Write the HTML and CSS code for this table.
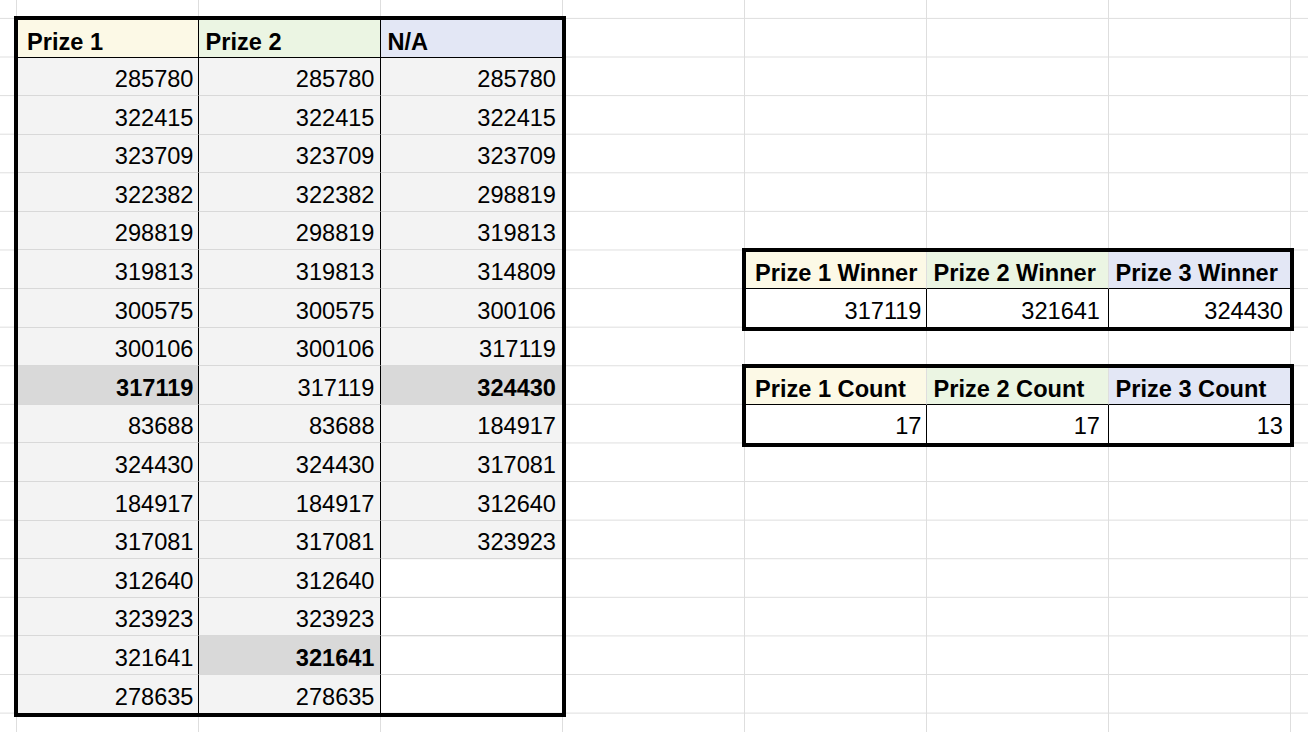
FILE: index.html
```html
<!DOCTYPE html>
<html>
<head>
<meta charset="utf-8">
<title>Prize draw</title>
<link rel="stylesheet" href="styles.css">
</head>
<body>
<div class="sheet">
  <div class="tbl main">
    <div class="c h y br first">Prize 1</div><div class="c h gr br">Prize 2</div><div class="c h b">N/A</div>
    <div class="c g br">285780</div><div class="c g br pb">285780</div><div class="c g pc">285780</div>
    <div class="c g br">322415</div><div class="c g br pb">322415</div><div class="c g pc">322415</div>
    <div class="c g br">323709</div><div class="c g br pb">323709</div><div class="c g pc">323709</div>
    <div class="c g br">322382</div><div class="c g br pb">322382</div><div class="c g pc">298819</div>
    <div class="c g br">298819</div><div class="c g br pb">298819</div><div class="c g pc">319813</div>
    <div class="c g br">319813</div><div class="c g br pb">319813</div><div class="c g pc">314809</div>
    <div class="c g br">300575</div><div class="c g br pb">300575</div><div class="c g pc">300106</div>
    <div class="c g br">300106</div><div class="c g br pb">300106</div><div class="c g pc">317119</div>
    <div class="c hl br">317119</div><div class="c g br pb">317119</div><div class="c hl pc">324430</div>
    <div class="c g br">83688</div><div class="c g br pb">83688</div><div class="c g pc">184917</div>
    <div class="c g br">324430</div><div class="c g br pb">324430</div><div class="c g pc">317081</div>
    <div class="c g br">184917</div><div class="c g br pb">184917</div><div class="c g pc">312640</div>
    <div class="c g br">317081</div><div class="c g br pb">317081</div><div class="c g pc">323923</div>
    <div class="c g br">312640</div><div class="c g br pb">312640</div><div class="c pc"></div>
    <div class="c g br">323923</div><div class="c g br pb">323923</div><div class="c pc"></div>
    <div class="c g br">321641</div><div class="c hl br pb">321641</div><div class="c pc"></div>
    <div class="c g br">278635</div><div class="c g br pb">278635</div><div class="c pc"></div>
  </div>

  <div class="tbl small winners">
    <div class="c h y hsep first">Prize 1 Winner</div><div class="c h gr hsep">Prize 2 Winner</div><div class="c h b">Prize 3 Winner</div>
    <div class="c w br last">317119</div><div class="c w br last pf">321641</div><div class="c w last pf">324430</div>
  </div>

  <div class="tbl small counts">
    <div class="c h y hsep first">Prize 1 Count</div><div class="c h gr hsep">Prize 2 Count</div><div class="c h b">Prize 3 Count</div>
    <div class="c w br last">17</div><div class="c w br last pf">17</div><div class="c w last pf">13</div>
  </div>
</div>
</body>
</html>
```

FILE: styles.css
```css
html, body {
  margin: 0;
  padding: 0;
  background: #ffffff;
  overflow: hidden;
}

.sheet {
  width: 1308px;
  height: 732px;
  overflow: hidden;
  display: grid;
  grid-template-columns: 17px repeat(7, 182px) 1fr;
  grid-template-rows: 17.5px 40px repeat(18, 38.6px);
  background-color: #ffffff;
  background-image:
    linear-gradient(to right, transparent 181px, #dedede 181px),
    linear-gradient(to bottom, transparent 37.6px, #dedede 37.6px);
  background-size: 182px 100%, 100% 38.6px;
  background-position: 17px 0, 0 57.5px;
  font-family: "Liberation Sans", Arial, sans-serif;
  font-size: 23.6px;
  color: #000000;
}

.tbl {
  position: relative;
  display: grid;
  grid-template-columns: repeat(3, 182px);
}

.tbl::after {
  content: "";
  position: absolute;
  top: -2px;
  left: -3px;
  right: -2.5px;
  bottom: -3.5px;
  border: 4px solid #000000;
  pointer-events: none;
}

.main {
  grid-column: 2 / 5;
  grid-row: 2 / 20;
  grid-template-rows: 40px repeat(17, 38.6px);
}

.small {
  grid-template-rows: repeat(2, 38.6px);
}

.winners {
  grid-column: 6 / 9;
  grid-row: 8 / 10;
}

.counts {
  grid-column: 6 / 9;
  grid-row: 11 / 13;
}

.c {
  box-sizing: border-box;
  min-width: 0;
  display: flex;
  align-items: flex-end;
  justify-content: flex-end;
  padding: 0 4.5px 2px 6.5px;
  border-bottom: 1px solid #d8d8d8;
  line-height: 27px;
  white-space: nowrap;
  overflow: hidden;
}

.g { background: #f3f3f3; }
.w { background: #ffffff; }
.hl { background: #d9d9d9; font-weight: 700; }
.br { border-right: 1px solid #000000; }
.hsep { border-right: 1px solid #dedede; }
.pb { padding-right: 5.5px; }
.pc { padding-right: 7px; }
.pf { padding-right: 8px; }

.h {
  justify-content: flex-start;
  font-weight: 700;
  border-bottom: 1px solid #000000;
  padding-bottom: 1px;
}

.first { padding-left: 10px; }

.y { background: #fcf9e6; }
.gr { background: #ebf5e3; }
.b { background: #e3e7f5; }

.last { border-bottom: 0; padding-bottom: 3px; }
```
